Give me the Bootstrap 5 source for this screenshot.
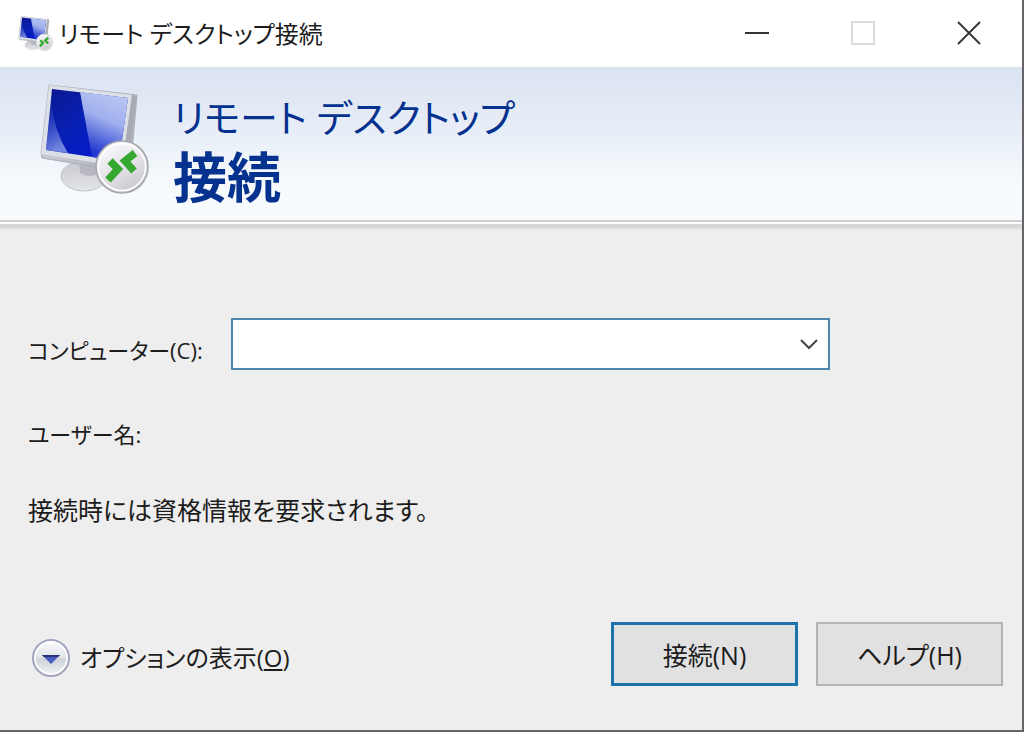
<!DOCTYPE html>
<html lang="ja">
<head>
<meta charset="utf-8">
<meta name="viewport" content="width=device-width, initial-scale=1">
<title>リモート デスクトップ接続</title>
<link href="https://cdn.jsdelivr.net/npm/bootstrap@5.3.0/dist/css/bootstrap.min.css" rel="stylesheet">
<style>
  body { font-family: "Open Sans", "Noto Sans CJK JP", sans-serif; font-size: 24px; line-height: 40px; font-weight: 400; font-feature-settings: "palt"; color: #1c1c1c; background: #eee; }
  button { font-feature-settings: inherit; }
  .rdp-window { border-right: 2px solid #646469; border-bottom: 2px solid #646469; }
  .title-bar { height: 67px; background: #fff; padding-left: 17px; }
  .caption-btn { width: 106px; border: 0; background: transparent; color: #333; padding: 0 0 6px; }
  .caption-btn:disabled { color: #d0d0d0; }
  .banner { height: 153px; padding-left: 36px; gap: 17px; background: linear-gradient(#dae3f1, #e9eff8 45%, #f6fafd 75%, #f8fbfe); color: #05318f; }
  .banner-icon { margin-bottom: 6px; }
  .banner-rule { height: 10px; background: linear-gradient(#cfcfcf 0 2px, #fcfcfc 2px 4px, #d6d6d6 4px 8px, #e4e4e4 8px); }
  .banner h1 { font-size: 38px; line-height: 60px; font-weight: 400; padding-top: 12px; }
  .banner strong { font-size: 54px; font-weight: 700; }
  .main-area { padding: 88px 19px 44px 28px; }
  .field-row { padding-right: 173px; }
  .field-label { width: 203px; padding-top: 12px; font-size: 22px; white-space: nowrap; }
  .computer-select { height: 52px; border: 2px solid #4a87ab; border-radius: 0; background-color: #fff; background-image: none; font-size: 24px; }
  .computer-box { position: relative; }
  .computer-box svg { position: absolute; right: 11px; top: 20px; pointer-events: none; }
  .user-row { margin-top: 44px; font-size: 22px; }
  .note-row { margin-top: 36px; font-size: 25px; }
  .dialog-btn { width: 187px; height: 64px; border: 2px solid #b4b4b4; border-radius: 0; background: #e1e1e1; color: #1c1c1c; font-size: 25px; padding: 3px 0 0; }
  .dialog-btn.default-btn { border: 3px solid #1f73ad; }
  .options-btn { border: 0; background: transparent; padding: 8px 0 0; color: inherit; gap: 9px; margin-left: 3px; }
  .btn-gap { gap: 18px; }
</style>
</head>
<body>
<svg width="0" height="0" class="position-absolute" aria-hidden="true">
  <defs>
    <linearGradient id="frame" x1="0" y1="0" x2="1" y2="1"><stop offset="0" stop-color="#c5c9d2"/><stop offset=".5" stop-color="#c8c9ce"/><stop offset="1" stop-color="#a2a3ab"/></linearGradient>
    <linearGradient id="deep" x1="0" y1="0" x2=".7" y2="1"><stop offset="0" stop-color="#0a1790"/><stop offset=".5" stop-color="#0820b4"/><stop offset="1" stop-color="#0418cf"/></linearGradient>
    <linearGradient id="sheen" x1=".7" y1="0" x2=".4" y2="1"><stop offset="0" stop-color="#b9c6f2"/><stop offset=".4" stop-color="#a0b0ee"/><stop offset=".9" stop-color="#2439cf"/></linearGradient>
    <linearGradient id="glow" x1="0" y1="0" x2=".3" y2="1"><stop offset="0" stop-color="#4a63d6" stop-opacity="0"/><stop offset="1" stop-color="#8c9fe8" stop-opacity=".8"/></linearGradient>
    <linearGradient id="foot" x1="0" y1="0" x2="0" y2="1"><stop offset="0" stop-color="#c6c8ce"/><stop offset="1" stop-color="#e4e5e8"/></linearGradient>
    <linearGradient id="disc" x1=".2" y1="0" x2=".8" y2="1"><stop offset="0" stop-color="#fbfbfd"/><stop offset=".55" stop-color="#e2e0e6"/><stop offset="1" stop-color="#c6c4ca"/></linearGradient>
    <linearGradient id="knob" x1="0" y1="0" x2="0" y2="1"><stop offset="0" stop-color="#fcfdff"/><stop offset=".45" stop-color="#e3e6ea"/><stop offset=".55" stop-color="#cfd4da"/><stop offset="1" stop-color="#f3f5f8"/></linearGradient>
    <symbol id="rdp" viewBox="0 0 120 120">
      <ellipse cx="48" cy="95" rx="23" ry="15" fill="url(#foot)" stroke="#c0c3ca"/>
      <path d="M43 78L66 82L64 92Q54 98 44 92Z" fill="#b8b9c0"/>
      <path d="M13 4L101 14L97 60L84 90L6 77L5 72Z" fill="url(#frame)" stroke="#a9afbb"/>
      <path d="M13 4L96 14L86 86L5 73Z" fill="#dcdfe6"/>
      <path d="M96 14L101 15L92 84L86 86Z" fill="#a9a9b2"/>
      <path d="M16 8L92 17L83 80L10 69Z" fill="url(#deep)"/>
      <path d="M44 11L92 17L83 80L56 76Z" fill="url(#sheen)"/>
      <path d="M15 20Q18 50 32 72L10 69Z" fill="url(#glow)"/>
      <circle cx="86" cy="86" r="26" fill="url(#disc)" stroke="#a5a7ad" stroke-width="1.5"/>
      <circle cx="86" cy="86" r="23.5" fill="none" stroke="#fff" stroke-width="1.5"/>
      <path d="M74 80L82 88L72 99" fill="none" stroke="#35a92f" stroke-width="7.5"/>
      <path d="M99 72L89 80L98 90" fill="none" stroke="#35a92f" stroke-width="7.5"/>
    </symbol>
  </defs>
</svg>
<div class="rdp-window d-flex flex-column min-vh-100">
  <header class="title-bar d-flex align-items-stretch justify-content-between">
    <div class="d-flex align-items-center gap-1">
      <svg width="38" height="38" aria-hidden="true"><use href="#rdp"/></svg>
      <span>リモート デスクトップ接続</span>
    </div>
    <div class="d-flex">
      <button class="caption-btn" type="button" aria-label="最小化"><svg width="24" height="24" viewBox="0 0 24 24"><path d="M0 12H24" stroke="currentColor" stroke-width="2"/></svg></button>
      <button class="caption-btn" type="button" aria-label="最大化" disabled><svg width="24" height="24" viewBox="0 0 24 24"><path d="M1 1H23V23H1Z" fill="none" stroke="currentColor" stroke-width="1.5"/></svg></button>
      <button class="caption-btn" type="button" aria-label="閉じる"><svg width="24" height="24" viewBox="0 0 24 24"><path d="M1 1L23 23M23 1L1 23" stroke="currentColor" stroke-width="1.8"/></svg></button>
    </div>
  </header>
  <section class="banner d-flex align-items-center">
    <svg class="banner-icon" width="120" height="120" aria-hidden="true"><use href="#rdp"/></svg>
    <h1 class="mb-0">リモート デスクトップ<br><strong>接続</strong></h1>
  </section>
  <div class="banner-rule"></div>
  <main class="main-area flex-grow-1 d-flex flex-column">
    <div class="field-row d-flex">
      <label class="field-label flex-shrink-0" for="computer">コンピューター(C):</label>
      <div class="computer-box flex-grow-1">
        <select id="computer" class="computer-select form-select"><option></option></select>
        <svg width="20" height="12" viewBox="0 0 20 12" aria-hidden="true"><path d="M2 2L10 10L18 2" fill="none" stroke="#444" stroke-width="2"/></svg>
      </div>
    </div>
    <div class="user-row">ユーザー名:</div>
    <div class="note-row">接続時には資格情報を要求されます。</div>
    <footer class="mt-auto d-flex align-items-center justify-content-between">
      <button class="options-btn d-flex align-items-center" type="button">
        <svg width="40" height="40" viewBox="0 0 40 40" aria-hidden="true"><circle cx="20" cy="20" r="18" fill="url(#knob)" stroke="#a4a6bd" stroke-width="2"/><circle cx="20" cy="20" r="16" fill="none" stroke="#fff" stroke-width="1.5"/><path d="M11 17H29L20 26Z" fill="#4a5cc4"/><path d="M11 17H29L27 19H13Z" fill="#26356f"/></svg>
        <span>オプションの表示(<u>O</u>)</span>
      </button>
      <div class="d-flex btn-gap">
        <button class="dialog-btn default-btn btn" type="button">接続(N)</button>
        <button class="dialog-btn btn" type="button">ヘルプ(H)</button>
      </div>
    </footer>
  </main>
</div>
<script src="https://cdn.jsdelivr.net/npm/bootstrap@5.3.0/dist/js/bootstrap.bundle.min.js"></script>
</body>
</html>
